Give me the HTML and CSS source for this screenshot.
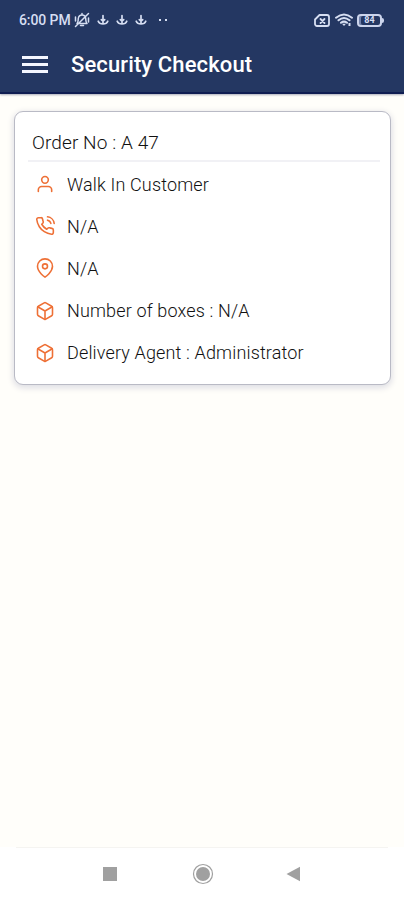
FILE: index.html
```html
<!DOCTYPE html>
<html lang="en">
<head>
<meta charset="utf-8">
<meta name="viewport" content="width=device-width, initial-scale=1">
<title>Security Checkout</title>
<link rel="stylesheet" href="styles.css">
</head>
<body>
<svg class="defs" aria-hidden="true">
  <symbol id="anchor" viewBox="0 0 12 12"><path d="M6 1.500V9.500M1.200 7.200c.8 2 2.500 2.800 4.800 2.800s4-.8 4.800-2.800M4.300 5.600L6 7.200l1.700-1.600"/></symbol>
  <symbol id="box" viewBox="0 0 24 24"><path d="M21 16V8a2 2 0 0 0-1-1.730l-7-4a2 2 0 0 0-2 0l-7 4A2 2 0 0 0 3 8v8a2 2 0 0 0 1 1.730l7 4a2 2 0 0 0 2 0l7-4A2 2 0 0 0 21 16z"/><path d="M3.270 6.960L12 12.010l8.730-5.050M12 22.080V12"/></symbol>
</svg>
<div class="phone">
  <header class="header">
    <div class="status">
      <span class="time">6:00 PM</span>
      <svg class="mute" viewBox="0 0 16 16"><path d="M3 11.500c1.500-1.500 1-3 1.300-5C4.700 4 6.300 3 8 3s3.400 1 3.700 3.500c.3 2-.2 3.500 1.300 5zM6.500 13.500h3M8 1.500V3M1.500 14.500l13-13M1.500 5v4M14.500 6v4"/></svg>
      <svg class="anchor"><use href="#anchor"/></svg>
      <svg class="anchor"><use href="#anchor"/></svg>
      <svg class="anchor"><use href="#anchor"/></svg>
      <span class="dots"><i></i><i></i></span>
      <span class="system">
        <svg class="sim" viewBox="0 0 16 13"><path d="M5.500 1H13a2 2 0 0 1 2 2v7a2 2 0 0 1-2 2H3a2 2 0 0 1-2-2V5.500z"/><path d="M6.500 5l4 4M10.500 5l-4 4"/></svg>
        <svg class="wifi" viewBox="0 0 18 14"><path d="M1 4.700q8-6.500 16 0M3.500 7.300q5.500-4.500 11 0M6 9.800q3-2.400 6 0"/><path class="solid" d="M7 10.800h4l-2 2.200zM13.500 10h2v3h-2z"/></svg>
        <span class="battery">84</span>
      </span>
    </div>
    <div class="appbar">
      <span class="menu"><i></i><i></i><i></i></span>
      <h1>Security Checkout</h1>
    </div>
  </header>
  <main>
    <section class="card">
      <h2>Order No : A 47</h2>
      <ul>
        <li><svg viewBox="0 0 24 24"><path d="M20 21v-2a4 4 0 0 0-4-4H8a4 4 0 0 0-4 4v2"/><circle cx="12" cy="7" r="4"/></svg><span>Walk In Customer</span></li>
        <li><svg viewBox="0 0 24 24"><path d="M15.050 5A5 5 0 0 1 19 8.950M15.050 1A9 9 0 0 1 23 8.940m-1 7.980v3a2 2 0 0 1-2.180 2 19.790 19.790 0 0 1-8.630-3.070 19.500 19.500 0 0 1-6-6 19.790 19.790 0 0 1-3.070-8.670A2 2 0 0 1 4.110 2h3a2 2 0 0 1 2 1.720 12.840 12.840 0 0 0 .7 2.810 2 2 0 0 1-.45 2.110L8.090 9.910a16 16 0 0 0 6 6l1.270-1.270a2 2 0 0 1 2.110-.45 12.840 12.840 0 0 0 2.810.7A2 2 0 0 1 22 16.920z"/></svg><span>N/A</span></li>
        <li><svg viewBox="0 0 24 24"><path d="M21 10c0 7-9 13-9 13s-9-6-9-13a9 9 0 0 1 18 0z"/><circle cx="12" cy="10" r="3"/></svg><span>N/A</span></li>
        <li><svg><use href="#box"/></svg><span>Number of boxes : N/A</span></li>
        <li><svg><use href="#box"/></svg><span>Delivery Agent : Administrator</span></li>
      </ul>
    </section>
  </main>
  <nav class="navbar">
    <svg viewBox="0 0 16 16"><path d="M1 1h14v14H1z"/></svg>
    <svg class="home" viewBox="0 0 22 22"><circle cx="11" cy="11" r="7"/><circle class="ring" cx="11" cy="11" r="9.500"/></svg>
    <svg viewBox="0 0 16 16"><path d="M1.500 8L15 .8v14.400z"/></svg>
  </nav>
</div>
</body>
</html>
```
FILE: styles.css
```css
* { box-sizing: border-box; }
body { margin: 0; background: #fffefa; font-family: Roboto, "Liberation Sans", sans-serif; }
h1, h2, ul { margin: 0; padding: 0; font-weight: 400; }
svg { display: block; flex: none; fill: none; stroke: currentColor; stroke-linecap: round; stroke-linejoin: round; }
.defs { position: absolute; width: 0; height: 0; }
.phone { height: 900px; display: flex; flex-direction: column; }

.header { height: 94px; background: #243762; border-bottom: 2px solid #101e52; box-shadow: 0 1px 2px #a9abb8; color: #fff; }
.status { height: 40px; display: flex; align-items: center; padding: 0 22px 0 19px; color: #d6def2; }
.time { width: 55px; font-size: 14px; font-weight: 500; letter-spacing: -0.1px; white-space: nowrap; }
.mute { width: 16px; height: 16px; margin-right: 7px; stroke-width: 1.5; }
.anchor { width: 12px; height: 12px; margin-right: 7px; stroke-width: 1.7; }
.dots { display: flex; gap: 4px; margin-left: 5px; }
.dots i { width: 2px; height: 2px; background: currentColor; }
.system { margin-left: auto; display: flex; align-items: center; }
.sim { width: 16px; height: 13px; margin-right: 5px; stroke-width: 1.8; }
.wifi { width: 18px; height: 14px; margin-right: 4px; stroke-width: 2; }
.wifi .solid { fill: currentColor; stroke: none; }
.battery { position: relative; width: 25px; height: 13px; border: 2px solid #cbd4ec; border-radius: 4px; font-size: 9px; line-height: 9px; font-weight: 700; text-align: center; box-shadow: inset 2px 0 0 #6f7fa8; }
.battery::after { content: ""; position: absolute; right: -4px; top: 2px; width: 2px; height: 5px; background: #cbd4ec; border-radius: 0 2px 2px 0; }
.appbar { height: 48px; display: flex; align-items: center; padding-left: 22px; }
.menu { width: 26px; display: flex; flex-direction: column; gap: 4px; margin-right: 23px; }
.menu i { height: 3px; background: #f4f6ff; }
h1 { font-size: 22px; font-weight: 500; line-height: 28px; letter-spacing: 0.12px; padding-top: 1px; white-space: nowrap; }

main { flex: 1; padding: 17px 13px 0 14px; }
.card { height: 274px; padding: 9px 10px 0 13px; background: #fff; border: 1px solid #b9bac5; border-radius: 9px; box-shadow: 0 2px 6px 1px #dedee4; color: #111; }
h2 { height: 41px; padding-left: 4px; border-bottom: 2px solid #f1f1f5; font-size: 19px; font-weight: 300; line-height: 43px; letter-spacing: 0.1px; }
ul { list-style: none; padding-top: 1px; }
li { height: 42.2px; display: flex; align-items: center; padding-left: 7px; font-size: 18px; font-weight: 300; letter-spacing: 0.15px; white-space: nowrap; }
li svg { width: 20px; height: 20px; margin-right: 12px; color: #ee7036; stroke-width: 1.9; }

.navbar { height: 53px; padding-right: 2px; display: flex; align-items: center; justify-content: center; gap: 73px; background: linear-gradient(#f5f4f1, #f5f4f1) center top / 372px 1px no-repeat #fff; color: #a0a0a0; }
.navbar svg { width: 16px; height: 16px; fill: currentColor; stroke: none; }
.navbar .home { width: 22px; height: 22px; margin-left: 1px; margin-right: -2px; }
.navbar .ring { fill: none; stroke: currentColor; stroke-width: 1.2; }
```
